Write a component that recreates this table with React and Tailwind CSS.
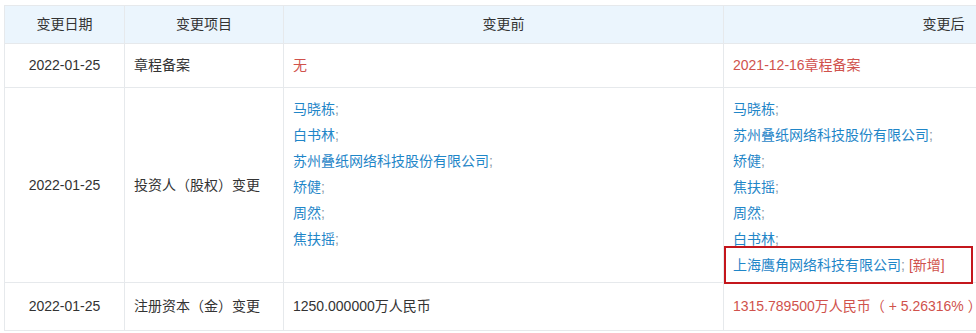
const rows = [
  {
    date: '2022-01-25',
    item: '章程备案',
    before: [{ text: '无', red: true }],
    after: [{ text: '2021-12-16章程备案', red: true }],
  },
  {
    date: '2022-01-25',
    item: '投资人（股权）变更',
    before: ['马晓栋', '白书林', '苏州叠纸网络科技股份有限公司', '矫健', '周然', '焦扶摇'],
    after: ['马晓栋', '苏州叠纸网络科技股份有限公司', '矫健', '焦扶摇', '周然', '白书林'],
    added: '上海鹰角网络科技有限公司',
  },
  {
    date: '2022-01-25',
    item: '注册资本（金）变更',
    before: [{ text: '1250.000000万人民币' }],
    after: [{ text: '1315.789500万人民币（ + 5.26316% ）', red: true }],
  },
];

function Names({ names, added }) {
  return (
    <div className="relative flex flex-col pt-[8px] pb-[4px]">
      {names.map((n, i) => (
        <div key={i} className="h-[26px] leading-[26px] whitespace-nowrap">
          <span className="text-[#1f86c8]">{n}</span>
          <span className="text-[#8a9aa8]">;</span>
        </div>
      ))}
      {added && (
        <div className="relative h-[26px] leading-[26px] whitespace-nowrap">
          <span className="text-[#1f86c8]">{added}</span>
          <span className="text-[#8a9aa8]">;</span>
          <span className="ml-[4px] text-[#d0524c]">[新增]</span>
          <div className="absolute -left-[9px] top-[-6px] w-[249px] h-[38px] border-2 border-[#c4161c]" />
        </div>
      )}
    </div>
  );
}

function Cell({ value }) {
  return value.map((v, i) => (
    <span key={i} className={`whitespace-nowrap ${v.red ? 'text-[#d0524c]' : 'text-[#333]'}`}>
      {v.text}
    </span>
  ));
}

export default function App() {
  return (
    <div
      className="w-[976px] h-[333px] overflow-hidden bg-white pl-[4px] pt-[5px]"
      style={{ fontFamily: '"Liberation Sans", "Noto Sans CJK SC", sans-serif' }}
    >
      <table className="table-fixed border-collapse w-[972px] text-[14px] text-[#333]">
        <colgroup>
          <col className="w-[120px]" />
          <col className="w-[159px]" />
          <col className="w-[440px]" />
          <col className="w-[253px]" />
        </colgroup>
        <thead>
          <tr className="h-[38px] bg-[#ebf5fd]">
            <th className="border border-[#e6e9ec] font-normal text-center">变更日期</th>
            <th className="border border-[#e6e9ec] font-normal text-center">变更项目</th>
            <th className="border border-[#e6e9ec] font-normal text-center">变更前</th>
            <th className="border border-[#e6e9ec] border-r-0 font-normal text-right pr-[12px]">变更后</th>
          </tr>
        </thead>
        <tbody>
          {rows.map((r, i) => (
            <tr key={i} className={i === 0 ? 'h-[44px]' : i === 2 ? 'h-[48px]' : ''}>
              <td className="border border-[#e6e9ec] text-center align-middle">{r.date}</td>
              <td className="border border-[#e6e9ec] px-[9px] align-middle">{r.item}</td>
              <td className={`border border-[#e6e9ec] px-[9px] ${r.added ? 'align-top' : 'align-middle'}`}>
                {r.added ? <Names names={r.before} /> : <Cell value={r.before} />}
              </td>
              <td className={`border border-[#e6e9ec] border-r-0 pl-[9px] pr-0 ${r.added ? 'align-top' : 'align-middle'}`}>
                {r.added ? <Names names={r.after} added={r.added} /> : <Cell value={r.after} />}
              </td>
            </tr>
          ))}
        </tbody>
      </table>
    </div>
  );
}
